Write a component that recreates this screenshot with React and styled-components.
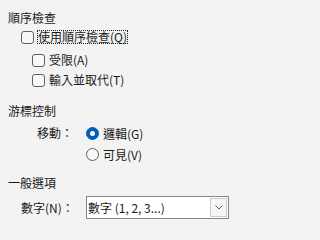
import styled, { createGlobalStyle } from "styled-components";

const GlobalStyle = createGlobalStyle`
  html, body {
    margin: 0;
    padding: 0;
    background: #f3f3f3;
  }
  body {
    font-family: "Noto Sans CJK TC", "Noto Sans", sans-serif;
    font-size: 12px;
    color: #1a1a1a;
  }
`;

const Panel = styled.div`
  width: 237px;
  height: 227px;
  box-sizing: border-box;
  padding: 8px 8px 0 8px;
  display: flex;
  flex-direction: column;
`;

const Heading = styled.div`
  height: 19px;
  line-height: 19px;
  margin-top: ${(p) => p.$top || 0}px;
`;

const CheckRow = styled.label`
  display: flex;
  align-items: center;
  gap: 3px;
  height: 20px;
  margin-top: ${(p) => p.$top || 0}px;
  padding-left: ${(p) => p.$indent}px;
`;

const Box = styled.span`
  width: 13px;
  height: 13px;
  box-sizing: border-box;
  border: 1px solid #5f5f5f;
  border-radius: 3px;
  background: #f8f8f8;
  flex: none;
`;

const CheckText = styled.span`
  line-height: 11px;
  padding-bottom: 1px;
  border: 1px dotted ${(p) => (p.$focus ? "#1a1a1a" : "transparent")};
  white-space: nowrap;
`;

const Field = styled.div`
  display: grid;
  grid-template-columns: 65px 1fr;
  align-items: center;
  padding-left: 13px;
  margin-top: ${(p) => p.$top || 0}px;
`;

const FieldLabel = styled.span`
  text-align: right;
  padding-right: 13px;
  white-space: nowrap;
`;

const RadioList = styled.div`
  display: flex;
  flex-direction: column;
  gap: 1px;
`;

const RadioRow = styled.label`
  display: flex;
  align-items: center;
  gap: 4px;
  height: 20px;
`;

const Radio = styled.span`
  width: 13px;
  height: 13px;
  box-sizing: border-box;
  border-radius: 50%;
  flex: none;
  display: flex;
  align-items: center;
  justify-content: center;
  border: 1px solid ${(p) => (p.$on ? "#005fb8" : "#5f5f5f")};
  background: ${(p) => (p.$on ? "#005fb8" : "#f8f8f8")};

  &::after {
    content: "";
    display: ${(p) => (p.$on ? "block" : "none")};
    width: 5px;
    height: 5px;
    border-radius: 50%;
    background: #ffffff;
  }
`;

const Select = styled.div`
  width: 143px;
  height: 23px;
  box-sizing: border-box;
  border: 1px solid #868686;
  background: #ffffff;
  display: flex;
  align-items: center;
  padding-left: 1px;
`;

const SelectValue = styled.span`
  flex: 1;
  white-space: nowrap;
`;

const DropButton = styled.span`
  width: 17px;
  height: 19px;
  margin-right: 1px;
  box-sizing: border-box;
  border: 1px solid #cccccc;
  background: #f6f6f6;
  display: flex;
  align-items: center;
  justify-content: center;
`;

function Check({ label, indent, top, focus }) {
  return (
    <CheckRow $indent={indent} $top={top}>
      <Box />
      <CheckText $focus={focus}>{label}</CheckText>
    </CheckRow>
  );
}

export default function App() {
  return (
    <>
      <GlobalStyle />
      <Panel>
        <Heading>順序檢查</Heading>
        <Check label="使用順序檢查(Q)" indent={13} focus />
        <Check label="受限(A)" indent={24} top={3} />
        <Check label="輸入並取代(T)" indent={24} />

        <Heading $top={11}>游標控制</Heading>
        <Field $top={3}>
          <FieldLabel style={{ alignSelf: "start", lineHeight: "20px" }}>移動：</FieldLabel>
          <RadioList>
            <RadioRow>
              <Radio $on />
              <span>邏輯(G)</span>
            </RadioRow>
            <RadioRow>
              <Radio />
              <span>可見(V)</span>
            </RadioRow>
          </RadioList>
        </Field>

        <Heading $top={9}>一般選項</Heading>
        <Field $top={4}>
          <FieldLabel>數字(N)：</FieldLabel>
          <Select>
            <SelectValue>數字 (1, 2, 3...)</SelectValue>
            <DropButton>
              <svg width="8" height="5" viewBox="0 0 8 5">
                <path d="M0.5 0.5 L4 4 L7.5 0.5" fill="none" stroke="#606060" strokeWidth="1" />
              </svg>
            </DropButton>
          </Select>
        </Field>
      </Panel>
    </>
  );
}
